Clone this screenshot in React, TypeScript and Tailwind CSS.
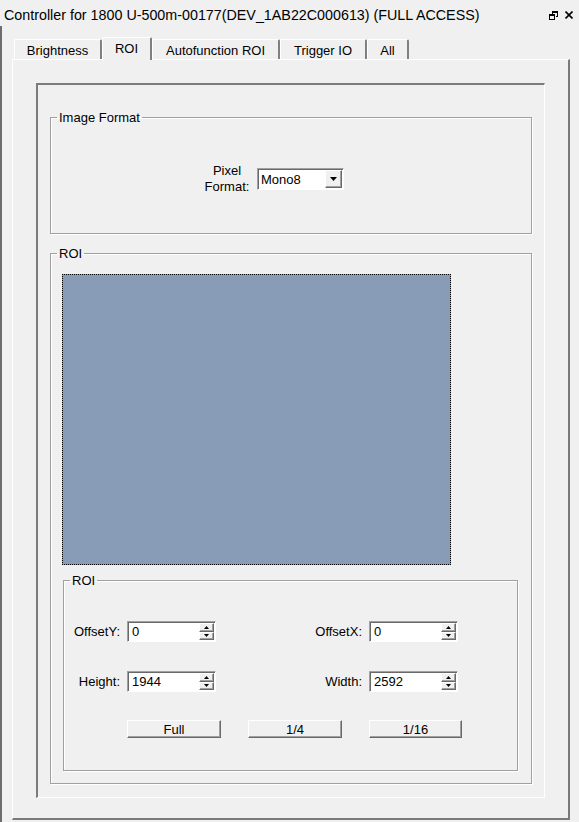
import React from "react";

function Arrow({ up, w = 5, h = 3 }: { up?: boolean; w?: number; h?: number }) {
  return (
    <svg width={w} height={h} viewBox={`0 0 ${w} ${h}`} className="block">
      <path
        d={up ? `M0 ${h} L${w} ${h} L${w / 2} 0 Z` : `M0 0 L${w} 0 L${w / 2} ${h} Z`}
        fill="#000"
      />
    </svg>
  );
}

function SpinBox({ value }: { value: string }) {
  return (
    <div className="flex h-[21px] w-[89px] border border-t-[#a0a0a0] border-l-[#a0a0a0] border-r-white border-b-white bg-white shadow-[inset_1px_1px_0_#696969]">
      <div className="flex-1 pl-[4px] pt-[1px] text-[13px] leading-[18px]">{value}</div>
      <div className="flex flex-col w-[16px] pt-[1px] pr-px pb-px">
        <div className="flex h-[9px] items-center justify-center border border-t-white border-l-white border-r-[#696969] border-b-[#696969] bg-[#f0f0f0] shadow-[inset_-1px_-1px_0_#a0a0a0]">
          <Arrow up />
        </div>
        <div className="flex h-[9px] items-center justify-center border border-t-white border-l-white border-r-[#696969] border-b-[#696969] bg-[#f0f0f0] shadow-[inset_-1px_-1px_0_#a0a0a0]">
          <Arrow />
        </div>
      </div>
    </div>
  );
}

function Button({ label, w }: { label: string; w: string }) {
  return (
    <div
      className={`${w} flex h-[18px] items-center justify-center border border-t-white border-l-white border-r-[#696969] border-b-[#696969] bg-[#f0f0f0] text-[13px] leading-none shadow-[inset_-1px_-1px_0_#a0a0a0]`}
    >
      {label}
    </div>
  );
}

const groupClass =
  "border border-[#a0a0a0] shadow-[1px_1px_0_#ffffff,inset_1px_1px_0_#ffffff]";

export default function App() {
  const tabs = [
    { label: "Brightness", w: "w-[88px]" },
    { label: "ROI", w: "w-[50px]", active: true },
    { label: "Autofunction ROI", w: "w-[128px]" },
    { label: "Trigger IO", w: "w-[87px]" },
    { label: "All", w: "w-[42px]" },
  ];

  return (
    <div className="w-[579px] h-[822px] overflow-hidden bg-[#f0f0f0] text-black font-['Liberation_Sans',Arial,sans-serif]">
      {/* title bar */}
      <div className="flex h-[26px] items-center pl-[4px] pr-[6px] pt-[4px] text-[14.3px] leading-none">
        <span>Controller for 1800 U-500m-00177(DEV_1AB22C000613) (FULL ACCESS)</span>
        <div className="ml-auto flex items-center gap-[7px]">
          <svg width="9" height="9" viewBox="0 0 9 9">
            <path d="M3 0h6v6h-2v-1h1v-3h-4v1h-1z" fill="#000" />
            <path d="M0 3h6v6h-6z M1 5v3h4v-3z" fill="#000" fillRule="evenodd" />
          </svg>
          <svg width="8" height="8" viewBox="0 0 8 8">
            <path d="M0.5 0.5 L7.5 7.5 M7.5 0.5 L0.5 7.5" stroke="#000" strokeWidth="1.6" />
          </svg>
        </div>
      </div>

      {/* window body */}
      <div className="h-[796px] border-l-2 border-[#6d6d6d] pt-[13px]">
        {/* tabs */}
        <div className="flex h-[20px] items-end pl-[12px]">
          {tabs.map((t) =>
            t.active ? (
              <div
                key={t.label}
                className={`${t.w} relative z-10 -mb-px flex h-[23px] justify-center rounded-t-[2px] border-t border-l border-white border-r-2 border-r-[#808080] bg-[#f0f0f0] pt-[3px] text-[13px] leading-[15px]`}
              >
                {t.label}
              </div>
            ) : (
              <div
                key={t.label}
                className={`${t.w} flex h-[20px] justify-center rounded-t-[2px] border-t border-l border-white border-r-2 border-r-[#808080] pt-[3px] text-[13px] leading-[15px]`}
              >
                {t.label}
              </div>
            )
          )}
        </div>

        {/* tab page */}
        <div className="ml-[10px] h-[761px] w-[558px] border-t border-l border-white border-r-2 border-b-2 border-r-[#7a7a7a] border-b-[#7a7a7a] pt-[23px] pl-[23px]">
          <div className="h-[715px] w-[509px] border-t-2 border-l-2 border-[#7b7b7b] border-r border-b border-r-white border-b-white px-[12px] pt-[25px]">
            {/* Image Format */}
            <fieldset className={`${groupClass} h-[124px] w-[482px]`}>
              <legend className="ml-[6px] px-[2px] text-[13px] leading-[15px]">Image Format</legend>
              <div className="ml-[150px] mt-[38px] flex items-center">
                <div className="w-[52px] text-center text-[13px] leading-[16px]">
                  Pixel
                  <br />
                  Format:
                </div>
                <div className="ml-[4px] flex h-[22px] w-[87px] border border-t-[#a0a0a0] border-l-[#a0a0a0] border-r-white border-b-white bg-white shadow-[inset_1px_1px_0_#696969]">
                  <div className="flex-1 pl-[3px] pt-[2px] text-[13px] leading-[17px]">Mono8</div>
                  <div className="mt-px mr-px mb-px flex w-[17px] items-center justify-center border border-t-white border-l-white border-r-[#696969] border-b-[#696969] bg-[#f0f0f0] shadow-[inset_-1px_-1px_0_#a0a0a0]">
                    <Arrow w={7} h={4} />
                  </div>
                </div>
              </div>
            </fieldset>

            {/* ROI */}
            <fieldset className={`${groupClass} mt-[12px] h-[538px] w-[482px]`}>
              <legend className="ml-[6px] px-[2px] text-[13px] leading-[15px]">ROI</legend>
              <div className="ml-[11px] mt-[13px] h-[291px] w-[389px] border border-dotted border-black bg-[#899cb7]" />

              <fieldset className={`${groupClass} ml-[12px] mt-[8px] h-[198px] w-[455px]`}>
                <legend className="ml-[6px] px-[2px] text-[13px] leading-[15px]">ROI</legend>

                <div className="mt-[33px] flex h-[21px] items-center text-[13px]">
                  <div className="w-[56px] text-right">OffsetY:</div>
                  <div className="ml-[7px]">
                    <SpinBox value="0" />
                  </div>
                  <div className="w-[146px] text-right">OffsetX:</div>
                  <div className="ml-[7px]">
                    <SpinBox value="0" />
                  </div>
                </div>

                <div className="mt-[29px] flex h-[21px] items-center text-[13px]">
                  <div className="w-[56px] text-right">Height:</div>
                  <div className="ml-[7px]">
                    <SpinBox value="1944" />
                  </div>
                  <div className="w-[146px] text-right">Width:</div>
                  <div className="ml-[7px]">
                    <SpinBox value="2592" />
                  </div>
                </div>

                <div className="ml-[63px] mt-[28px] flex gap-[27px]">
                  <Button label="Full" w="w-[94px]" />
                  <Button label="1/4" w="w-[94px]" />
                  <Button label="1/16" w="w-[93px]" />
                </div>
              </fieldset>
            </fieldset>
          </div>
        </div>
      </div>
    </div>
  );
}
